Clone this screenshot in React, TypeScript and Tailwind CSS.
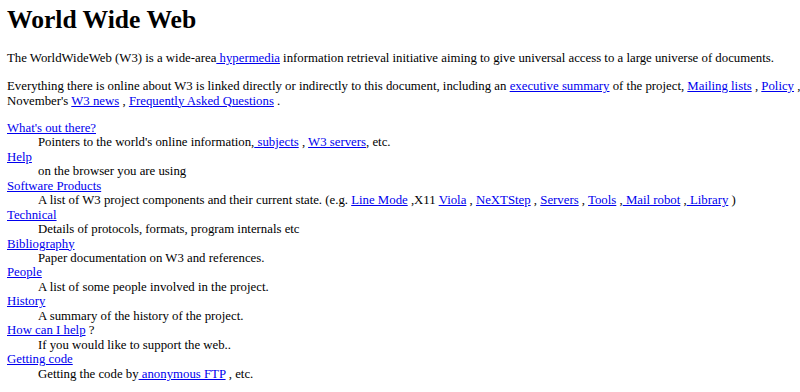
import React from 'react'

const A = ({ children }: { children: React.ReactNode }) => (
  <a href="#" className="text-[#0000ee] underline">
    {children}
  </a>
)

const entries: { term: React.ReactNode; desc: React.ReactNode }[] = [
  {
    term: <A>What's out there?</A>,
    desc: (
      <>
        Pointers to the world's online information,<A> subjects</A> , <A>W3 servers</A>, etc.
      </>
    ),
  },
  { term: <A>Help</A>, desc: 'on the browser you are using' },
  {
    term: <A>Software Products</A>,
    desc: (
      <>
        A list of W3 project components and their current state. (e.g. <A>Line Mode</A> ,X11 <A>Viola</A> ,{' '}
        <A>NeXTStep</A> , <A>Servers</A> , <A>Tools</A> ,<A> Mail robot</A> ,<A> Library</A> )
      </>
    ),
  },
  { term: <A>Technical</A>, desc: 'Details of protocols, formats, program internals etc' },
  { term: <A>Bibliography</A>, desc: 'Paper documentation on W3 and references.' },
  { term: <A>People</A>, desc: 'A list of some people involved in the project.' },
  { term: <A>History</A>, desc: 'A summary of the history of the project.' },
  {
    term: (
      <>
        <A>How can I help</A> ?
      </>
    ),
    desc: 'If you would like to support the web..',
  },
  {
    term: <A>Getting code</A>,
    desc: (
      <>
        Getting the code by<A> anonymous FTP</A> , etc.
      </>
    ),
  },
]

export default function App() {
  return (
    <div className="min-h-screen overflow-hidden bg-white pl-[7px] pt-[5px] text-[12.8px] leading-[14.45px] text-black [font-family:'Liberation_Serif','Times_New_Roman',serif]">
      <h1 className="text-[25.6px] font-bold leading-[30px]">World Wide Web</h1>

      <p className="mt-[16px]">
        The WorldWideWeb (W3) is a wide-area<A> hypermedia</A> information retrieval initiative aiming to give
        universal access to a large universe of documents.
      </p>

      <p className="mt-[13.6px] -mr-[12px]">
        Everything there is online about W3 is linked directly or indirectly to this document, including an{' '}
        <A>executive summary</A> of the project, <A>Mailing lists</A> , <A>Policy</A>{'\u00a0'}, November's{' '}
        <A>W3 news</A> , <A>Frequently Asked Questions</A> .
      </p>

      <dl className="mt-[13px]">
        {entries.map((e, i) => (
          <React.Fragment key={i}>
            <dt>{e.term}</dt>
            <dd className="ml-[31px]">{e.desc}</dd>
          </React.Fragment>
        ))}
      </dl>
    </div>
  )
}
